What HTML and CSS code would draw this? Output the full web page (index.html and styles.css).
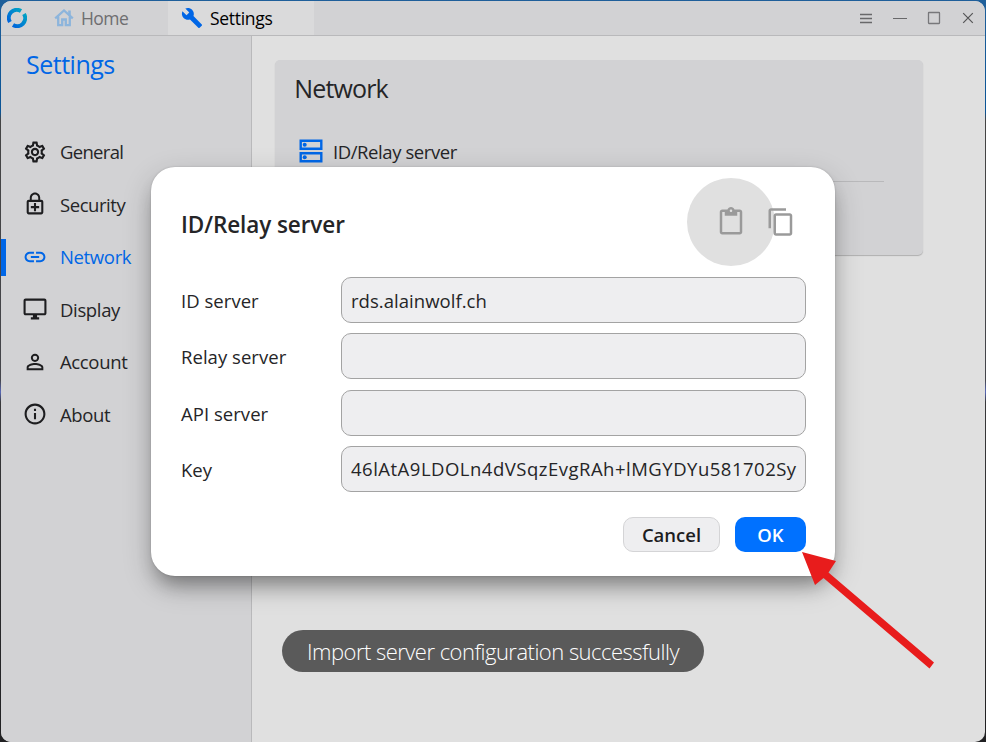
FILE: index.html
```html
<!DOCTYPE html>
<html lang="en">
<head>
<meta charset="utf-8">
<title>Settings</title>
<link rel="stylesheet" href="styles.css">
</head>
<body>
<div class="window">
  <header class="titlebar">
    <svg class="logo" viewBox="0 0 20 20"><defs><linearGradient id="g" x1="1" y1="0" x2="0" y2="1"><stop offset="0" stop-color="#00a2c4"/><stop offset="1" stop-color="#0065dc"/></linearGradient></defs><g fill="none" stroke="url(#g)" stroke-width="4"><path d="M14 3A8 8 0 0 0 3 14"/><path d="M17 6A8 8 0 0 1 6 17"/></g></svg>
    <div class="tab home">
      <svg viewBox="0 0 20 18"><path d="M1.200 9.300 10 1.500l8.800 7.800M4.200 7.500V16.200H8.200V10.500H11.800V16.200H15.800V7.500" fill="none" stroke="#8db5dc" stroke-width="2.300"/><path d="M14.200 1.500h2.600v5h-2.600z" fill="#8db5dc"/></svg>
      <span>Home</span>
    </div>
    <div class="tab current">
      <svg viewBox="0 0 24 24"><path fill="#0066e6" d="M22.700 19l-9.100-9.100c.9-2.300.4-5-1.500-6.900-2-2-5-2.400-7.400-1.300L9 6 6 9 1.600 4.700C.4 7.100.9 10.100 2.900 12.100c1.900 1.900 4.600 2.400 6.900 1.500l9.100 9.100c.4.4 1 .4 1.400 0l2.300-2.300c.5-.4.5-1.100.1-1.400z"/></svg>
      <span>Settings</span>
    </div>
    <div class="controls">
      <svg viewBox="0 0 14 14"><path d="M1 3.500H13M1 7.500H13M1 11.500H13" stroke="#68686a" stroke-width="1.300"/></svg>
      <svg viewBox="0 0 14 14"><path d="M0 7.500H14" stroke="#68686a"/></svg>
      <svg viewBox="0 0 14 14"><rect x="1.500" y="1.500" width="11" height="11" rx=".5" fill="none" stroke="#77777a" stroke-width="1.300"/></svg>
      <svg viewBox="0 0 14 14"><path d="M2.200 2.200 11.800 11.800M11.800 2.200 2.200 11.800" stroke="#555557" stroke-width="1.200"/></svg>
    </div>
  </header>
  <div class="body">
    <nav class="sidebar">
      <h1>Settings</h1>
      <a class="item general"><svg viewBox="0 0 24 24"><path d="M19.430 12.980c.04-.32.07-.64.07-.98s-.03-.66-.07-.98l2.110-1.650c.19-.15.24-.42.12-.64l-2-3.460c-.12-.22-.39-.3-.61-.22l-2.490 1c-.52-.4-1.080-.73-1.690-.98l-.38-2.650C14.460 2.180 14.250 2 14 2h-4c-.25 0-.46.18-.49.42l-.38 2.650c-.61.25-1.170.59-1.690.98l-2.490-1c-.23-.09-.49 0-.61.22l-2 3.460c-.13.22-.07.49.12.64l2.110 1.650c-.04.32-.07.65-.07.98s.03.66.07.98l-2.110 1.650c-.19.15-.24.42-.12.64l2 3.460c.12.22.39.3.61.22l2.490-1c.52.4 1.080.73 1.690.98l.38 2.650c.03.24.24.42.49.42h4c.25 0 .46-.18.49-.42l.38-2.650c.61-.25 1.170-.59 1.690-.98l2.490 1c.23.09.49 0 .61-.22l2-3.460c.12-.22.07-.49-.12-.64l-2.110-1.650zm-1.980-1.710c.04.31.05.52.05.73s-.02.43-.05.73l-.14 1.130.89.7 1.080.84-.7 1.210-1.270-.51-1.040-.42-.9.680c-.43.32-.84.56-1.250.73l-1.060.43-.16 1.130-.2 1.350h-1.400l-.19-1.350-.16-1.130-1.060-.43c-.43-.18-.83-.41-1.230-.71l-.91-.7-1.060.43-1.270.51-.7-1.210 1.080-.84.89-.7-.14-1.130c-.03-.31-.05-.54-.05-.74s.02-.43.05-.73l.14-1.130-.89-.7-1.080-.84.7-1.210 1.270.51 1.040.42.9-.68c.43-.32.84-.56 1.250-.73l1.060-.43.16-1.130.2-1.350h1.390l.19 1.350.16 1.130 1.060.43c.43.18.83.41 1.230.71l.91.7 1.060-.43 1.270-.51.7 1.210-1.070.85-.89.7.14 1.130zM12 8c-2.210 0-4 1.790-4 4s1.790 4 4 4 4-1.790 4-4-1.790-4-4-4zm0 6c-1.100 0-2-.9-2-2s.9-2 2-2 2 .9 2 2-.9 2-2 2z"/></svg><span>General</span></a>
      <a class="item security"><svg viewBox="0 0 24 24"><path d="M18 8h-1V6c0-2.760-2.240-5-5-5S7 3.240 7 6v2H6c-1.100 0-2 .9-2 2v10c0 1.100.9 2 2 2h12c1.100 0 2-.9 2-2V10c0-1.100-.9-2-2-2zM8.900 6c0-1.710 1.390-3.100 3.100-3.100s3.100 1.390 3.100 3.100v2H8.900V6zM18 20H6V10h12v10zm-7-1h2v-3h3v-2h-3v-3h-2v3H8v2h3z"/></svg><span>Security</span></a>
      <a class="item network active"><svg viewBox="0 0 24 24"><path d="M3.900 12c0-1.710 1.390-3.100 3.100-3.100h4V7H7c-2.760 0-5 2.240-5 5s2.240 5 5 5h4v-1.900H7c-1.710 0-3.100-1.390-3.100-3.100zM8 13h8v-2H8v2zm9-6h-4v1.900h4c1.710 0 3.100 1.390 3.100 3.100s-1.390 3.100-3.100 3.100h-4V17h4c2.760 0 5-2.240 5-5s-2.240-5-5-5z"/></svg><span>Network</span></a>
      <a class="item display"><svg viewBox="0 0 24 24"><path d="M21 2H3c-1.100 0-2 .9-2 2v12c0 1.100.9 2 2 2h7v2H8v2h8v-2h-2v-2h7c1.100 0 2-.9 2-2V4c0-1.100-.9-2-2-2zm0 14H3V4h18v12z"/></svg><span>Display</span></a>
      <a class="item account"><svg viewBox="0 0 24 24"><path d="M12 5.900a2.100 2.100 0 1 1 0 4.200 2.100 2.100 0 0 1 0-4.200m0 9c2.970 0 6.100 1.460 6.100 2.100v1.100H5.900V17c0-.64 3.130-2.100 6.100-2.100M12 4C9.790 4 8 5.790 8 8s1.790 4 4 4 4-1.790 4-4-1.790-4-4-4zm0 9c-2.670 0-8 1.340-8 4v3h16v-3c0-2.660-5.330-4-8-4z"/></svg><span>Account</span></a>
      <a class="item about"><svg viewBox="0 0 24 24"><path d="M11 7h2v2h-2zm0 4h2v6h-2zm1-9C6.480 2 2 6.480 2 12s4.480 10 10 10 10-4.480 10-10S17.520 2 12 2zm0 18c-4.410 0-8-3.590-8-8s3.590-8 8-8 8 3.590 8 8-3.590 8-8 8z"/></svg><span>About</span></a>
    </nav>
    <main class="content">
      <section class="card">
        <h2>Network</h2>
        <div class="relay">
          <svg viewBox="0 0 24 24"><g fill="none" stroke="#0066e6" stroke-width="2.400"><path d="M1.700 1.700H22.300V9.800H1.700zM1.700 14.200H22.300V22.300H1.700z"/></g><g fill="#0066e6"><circle cx="5.700" cy="5.800" r="2"/><circle cx="5.700" cy="18.200" r="2"/></g></svg>
          <span>ID/Relay server</span>
        </div>
        <hr>
      </section>
    </main>
  </div>
</div>

<div class="dialog">
  <div class="dialog-head">
    <h3>ID/Relay server</h3>
    <div class="paste"><svg viewBox="0 0 24 24"><path d="M19 2h-4.180C14.400.84 13.300 0 12 0S9.600.84 9.180 2H5c-1.100 0-2 .9-2 2v16c0 1.100.9 2 2 2h14c1.100 0 2-.9 2-2V4c0-1.100-.9-2-2-2zm-7 0c.55 0 1 .45 1 1s-.45 1-1 1-1-.45-1-1 .45-1 1-1zm7 18H5V4h2v3h10V4h2v16z"/></svg></div>
    <svg class="copy" viewBox="0 0 24 24"><path d="M16 1H4c-1.100 0-2 .9-2 2v14h2V3h12V1zm3 4H8c-1.100 0-2 .9-2 2v14c0 1.100.9 2 2 2h11c1.100 0 2-.9 2-2V7c0-1.100-.9-2-2-2zm0 16H8V7h11v14z"/></svg>
  </div>
  <div class="form">
    <label><span>ID server</span></label><div class="field"><span>rds.alainwolf.ch</span></div>
    <label><span>Relay server</span></label><div class="field"></div>
    <label><span>API server</span></label><div class="field"></div>
    <label><span>Key</span></label><div class="field"><span class="key">46lAtA9LDOLn4dVSqzEvgRAh+lMGYDYu581702Sy</span></div>
  </div>
  <div class="actions">
    <button class="cancel"><span>Cancel</span></button>
    <button class="ok"><span>OK</span></button>
  </div>
</div>

<div class="toast"><span>Import server configuration successfully</span></div>
<svg class="arrow" viewBox="0 0 140 125"><path fill="#e81c1c" d="M2 1 36 10 28.500 21.500 134 111.500 129.500 117.500 23.500 27 15 34z"/></svg>
</body>
</html>
```
FILE: styles.css
```css
* { box-sizing: border-box; }
body {
  margin: 0; width: 986px; height: 742px; overflow: hidden; position: relative;
  padding: 1px 1px 0 1px;
  background: linear-gradient(#1f5f9a 0, #0a5496 112px, #444 120px, #44454a 380px, #5868b8 392px, #38383a 402px, #202022 742px);
  font-family: "Open Sans", "Noto Sans", sans-serif; font-size: 18.500px; font-weight: 400; color: #252527;
}
h1, h2, h3 { margin: 0; font-weight: 400; }
span, h1, h2, h3 { white-space: nowrap; }
.window { height: 741px; border-radius: 10px; overflow: hidden; background: #e0e0e0; display: flex; flex-direction: column; }
.titlebar { height: 35px; flex: none; display: flex; background: #d2d2d4; border-bottom: 1px solid #b9b9bb; }
.logo { width: 20px; height: 20px; margin: 7px 27px 0 6px; }
.tab { display: flex; align-items: center; font-size: 17.500px; letter-spacing: -.3px; padding-bottom: 1px; }
.home { width: 114px; color: #6e6e70; gap: 7px; letter-spacing: -.55px; }
.home svg { width: 20px; height: 18px; }
.current { width: 146px; background: #dadadb; color: #000; padding-left: 13px; gap: 7px; }
.current svg { width: 22px; height: 22px; }
.controls { margin-left: auto; display: flex; gap: 20px; padding: 10px 10px 0 0; }
.controls svg { width: 14px; height: 14px; }
.body { flex: 1; display: flex; }
.sidebar { width: 251px; background: #d2d2d4; border-right: 1px solid #b9b9bb; }
.sidebar h1 { color: #0066e6; font-size: 25px; line-height: 34px; padding: 11px 0 0 25px; margin-bottom: 44.500px; letter-spacing: -.5px; }
.item { height: 52.500px; display: flex; align-items: center; padding-left: 21px; gap: 12px; position: relative; letter-spacing: -.35px; }
.item.general { letter-spacing: -.7px; }
.item.security { letter-spacing: -.45px; }
.item svg { width: 26px; height: 26px; padding: .5px; fill: #1d1d1f; flex: none; }
.item.active { color: #0066e6; }
.item.active svg { fill: #0066e6; }
.item.active::before { content: ""; position: absolute; left: 0; top: 8px; width: 5px; height: 37px; background: #0066e6; }
.content { flex: 1; padding: 23.500px 0 0 23.300px; }
.card { width: 647.500px; height: 195.500px; background: #d2d2d4; border-radius: 5px; box-shadow: 0 1px 1px rgba(0,0,0,.22); padding: 11px 39px 0 19px; }
.card h2 { font-size: 25px; line-height: 34px; letter-spacing: -.85px; }
.relay { height: 30px; margin-top: 31.500px; display: flex; align-items: center; gap: 10px; padding-left: 4.700px; letter-spacing: -.42px; }
.relay svg { width: 24px; height: 24px; }
.card hr { border: 0; border-top: 1px solid #b9b9bb; margin: 15px 0 0; }
.dialog { position: absolute; left: 151px; top: 167px; width: 684px; height: 409px; background: #fff; border-radius: 24px; padding: 11px 29px 0 30px; box-shadow: 0 0 2px rgba(0,0,0,.2), 0 14px 19px -6px rgba(0,0,0,.32), 0 10px 30px rgba(0,0,0,.2); }
.dialog-head { display: flex; align-items: center; height: 88px; }
.dialog h3 { font-size: 22.500px; font-weight: 600; flex: 1; padding-top: 5px; letter-spacing: -.08px; }
.paste { width: 88px; height: 88px; border-radius: 50%; background: #e0e0e0; display: flex; align-items: center; justify-content: center; }
.dialog-head svg { width: 30px; height: 30px; fill: #9a9a9a; }
.copy { margin: 0 10px 0 -9px; position: relative; }
.form { display: grid; grid-template-columns: 160px 465px; grid-auto-rows: 46px; row-gap: 10.250px; margin-top: 11px; letter-spacing: .04px; }
.form label { display: flex; align-items: center; padding-top: 1px; }
.field { border: 1px solid #a3a3a3; border-radius: 10px; background: #eeeef0; display: flex; align-items: center; padding: 0 9px; }
.key { letter-spacing: .5px; }
.actions { display: flex; justify-content: flex-end; gap: 15px; margin-top: 25px; }
button { height: 35px; border-radius: 10px; font: 600 18.500px "Open Sans", sans-serif; padding: 0; }
.cancel { width: 97px; border: 1px solid #d4d4d6; background: #eeeef0; color: #1d1d1f; }
.ok { width: 71px; border: 0; background: #0071ff; color: #fff; }
.toast { position: absolute; left: 282px; top: 630px; width: 422px; height: 42px; border-radius: 21px; background: #5a5a5a; color: #fff; display: flex; align-items: center; justify-content: center; font-size: 22px; font-weight: 300; letter-spacing: -.52px; padding-bottom: 1px; }
.arrow { position: absolute; left: 800px; top: 551px; width: 140px; height: 125px; }
```
